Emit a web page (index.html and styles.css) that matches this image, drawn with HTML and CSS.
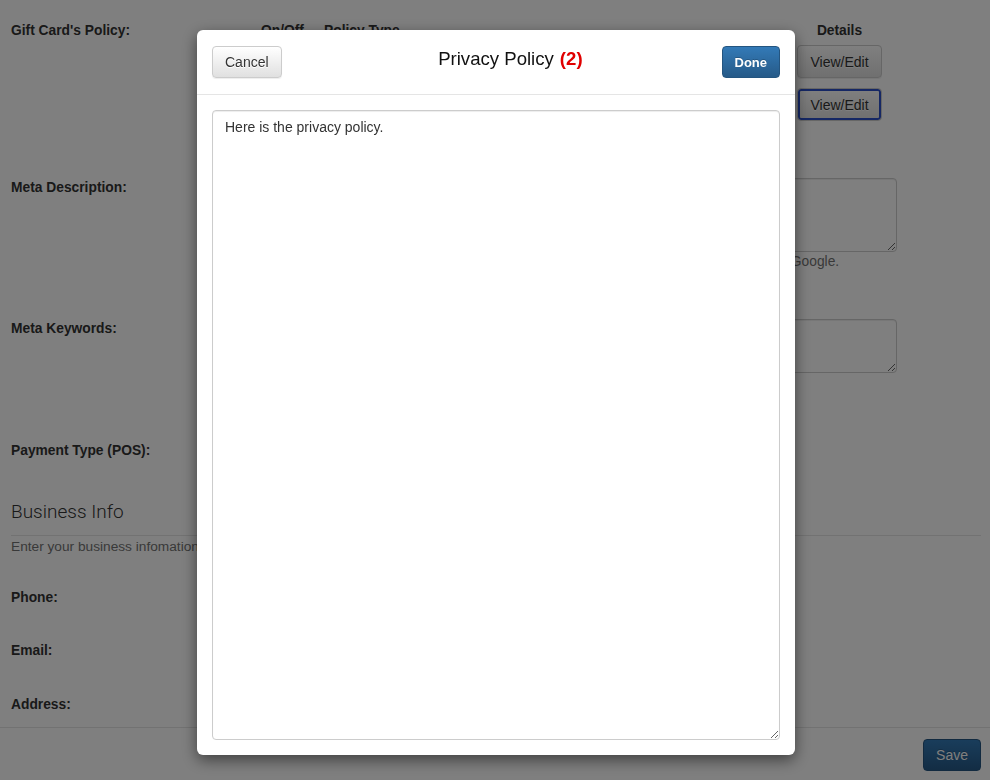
FILE: index.html
```html
<!DOCTYPE html>
<html>
<head>
<meta charset="utf-8">
<link rel="stylesheet" href="styles.css">
</head>
<body>
<div class="page">
  <div class="row row-policy">
    <div class="label">Gift Card's Policy:</div>
    <div class="control">
      <table class="policy-table">
        <thead>
          <tr><th class="c-on">On/Off</th><th class="c-type">Policy Type</th><th class="c-details">Details</th></tr>
        </thead>
        <tbody>
          <tr><td class="c-on"><span class="toggle"></span></td><td class="c-type">Return Policy</td><td class="c-details"><button class="btn btn-default">View/Edit</button></td></tr>
          <tr><td class="c-on"><span class="toggle"></span></td><td class="c-type">Privacy Policy</td><td class="c-details"><button class="btn btn-default btn-focus">View/Edit</button></td></tr>
        </tbody>
      </table>
    </div>
  </div>

  <div class="row row-desc">
    <div class="label">Meta Description:</div>
    <div class="control">
      <textarea class="form-control ta-desc"></textarea>
      <div class="help">Write a short description of your business. This text is displayed in the search results by Google.</div>
    </div>
  </div>

  <div class="row row-keys">
    <div class="label">Meta Keywords:</div>
    <div class="control">
      <textarea class="form-control ta-keys"></textarea>
    </div>
  </div>

  <div class="row row-pay">
    <div class="label">Payment Type (POS):</div>
    <div class="control checks">
      <label><input type="checkbox" checked> Cash</label>
      <label><input type="checkbox" checked> Credit Card</label>
    </div>
  </div>

  <h3 class="section-title">Business Info</h3>
  <div class="section-help">Enter your business infomation here.</div>

  <div class="row row-phone"><div class="label">Phone:</div><div class="control"></div></div>
  <div class="row row-email"><div class="label">Email:</div><div class="control"></div></div>
  <div class="row row-addr"><div class="label">Address:</div><div class="control"></div></div>
</div>
<div class="footer">
  <button class="btn btn-primary">Save</button>
</div>

<div class="backdrop"></div>
<div class="modal-wrap">
  <div class="modal">
    <div class="modal-header">
      <button class="btn btn-default cancel">Cancel</button>
      <div class="modal-title">Privacy Policy<span class="count">(2)</span></div>
      <button class="btn btn-primary done">Done</button>
    </div>
    <div class="modal-body">
      <textarea class="form-control policy-text">Here is the privacy policy.</textarea>
    </div>
  </div>
</div>
</body>
</html>
```

FILE: styles.css
```css
html, body {
  margin: 0;
  padding: 0;
  background: #fff;
  font-family: "Liberation Sans", Arial, sans-serif;
  font-size: 14px;
  color: #333;
  height: 780px;
  overflow: hidden;
}

.page {
  padding: 22px 9px 0 11px;
}

.row {
  display: grid;
  grid-template-columns: 242px 644px;
}

.label {
  font-weight: bold;
  font-size: 13.8px;
  line-height: 18px;
}

.policy-table {
  width: 100%;
  border-collapse: collapse;
}
.policy-table th {
  font-weight: bold;
  font-size: 13.8px;
  line-height: 18px;
  height: 23px;
  vertical-align: top;
  text-align: left;
  padding: 0 8px;
}
.policy-table td {
  padding: 0 8px;
  vertical-align: middle;
  font-size: 14px;
}
.policy-table tbody tr + tr td {
  padding-top: 10px;
}
.policy-table .c-on { width: 47px; }
.policy-table .c-details { width: 99px; text-align: center; }
.toggle {
  display: inline-block;
  width: 36px;
  height: 18px;
  border-radius: 9px;
  background: #5cb85c;
}

.btn {
  font-family: "Liberation Sans", Arial, sans-serif;
  font-size: 14px;
  height: 33px;
  padding: 0 12px;
  border-radius: 4px;
  border: 1px solid #ccc;
  cursor: pointer;
}
.btn-default {
  color: #333;
  background: linear-gradient(#fff, #e0e0e0);
  box-shadow: inset 0 1px 0 rgba(255,255,255,.15), 0 1px 1px rgba(0,0,0,.075);
  text-shadow: 0 1px 0 #fff;
}
.btn-focus {
  box-shadow: inset 0 0 0 2px #2a4fc9;
}
.btn-primary {
  color: #fff;
  background: linear-gradient(#337ab7, #265a88);
  border-color: #245580;
  text-shadow: 0 -1px 0 rgba(0,0,0,.2);
}

.form-control {
  display: block;
  width: 100%;
  box-sizing: border-box;
  border: 1px solid #ccc;
  border-radius: 4px;
  padding: 6px 12px;
  font-family: "Liberation Sans", Arial, sans-serif;
  font-size: 14px;
  line-height: 20px;
  color: #555;
  box-shadow: inset 0 1px 1px rgba(0,0,0,.075);
  resize: vertical;
}

.row-desc { margin-top: 57px; }
.row-desc .label, .row-keys .label { padding-top: 1px; }
.ta-desc { height: 74px; }
.help {
  margin-top: 1px;
  color: #737373;
  font-size: 13.8px;
  line-height: 18px;
  white-space: nowrap;
}

.row-keys { margin-top: 48px; }
.ta-keys { height: 54px; }

.row-pay { margin-top: 69px; }
.checks { display: flex; gap: 16px; line-height: 18px; }
.checks input { margin: 0 4px 0 0; vertical-align: -2px; }

.section-title {
  margin: 40px 0 0;
  font-family: Roboto, "Liberation Sans", sans-serif;
  font-weight: 300;
  font-size: 19px;
  line-height: 24px;
  padding-bottom: 11px;
  border-bottom: 1px solid #e5e5e5;
  color: #333;
}
.section-help {
  margin-top: 2px;
  color: #737373;
  font-size: 13.7px;
  line-height: 18px;
}

.row-phone { margin-top: 33px; }
.row-email { margin-top: 35px; }
.row-addr { margin-top: 36px; }

.footer {
  margin-top: 13px;
  border-top: 1px solid #e5e5e5;
  padding: 11px 9px;
  display: flex;
  justify-content: flex-end;
}
.footer .btn { height: 32px; padding: 0 12px; }

.backdrop {
  position: fixed;
  inset: 0;
  background: rgba(0,0,0,.5);
}
.modal-wrap {
  position: fixed;
  inset: 0;
  display: flex;
  justify-content: center;
  align-items: flex-start;
  padding: 30px 0 0 2px;
}
.modal {
  width: 598px;
  height: 725px;
  background: #fff;
  border-radius: 6px;
  box-shadow: 0 5px 15px rgba(0,0,0,.5);
  display: flex;
  flex-direction: column;
}
.modal-header {
  display: grid;
  grid-template-columns: 1fr auto 1fr;
  align-items: center;
  padding: 16px 15px 16px;
  border-bottom: 1px solid #e5e5e5;
}
.modal-header .btn { height: 32px; }
.cancel { justify-self: start; }
.done { justify-self: end; font-weight: bold; font-size: 13px; }
.modal-title {
  position: relative;
  font-size: 18.6px;
  line-height: 22px;
  color: #111;
  margin-bottom: 7px;
}
.count {
  position: absolute;
  left: 100%;
  margin-left: 6px;
  color: #e00000;
  font-weight: bold;
  white-space: nowrap;
}
.modal-body {
  flex: 1;
  display: flex;
  padding: 15px;
}
.policy-text {
  flex: 1;
  height: auto;
  color: #333;
  resize: both;
}
```
